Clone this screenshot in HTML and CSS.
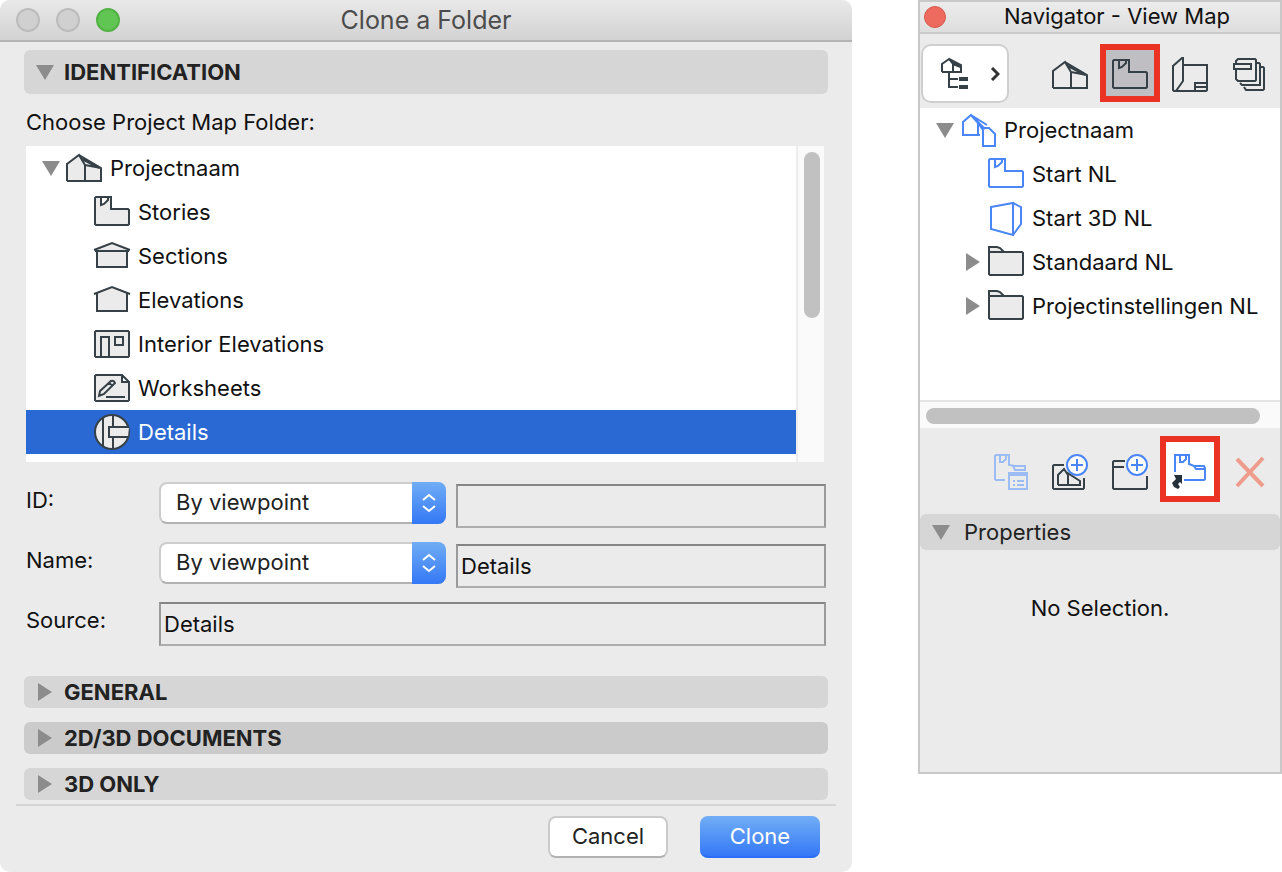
FILE: index.html
```
<!DOCTYPE html>
<html lang="en">
<head>
    <meta charset="UTF-8">
    <meta name="viewport" content="width=device-width, initial-scale=1.0">
    <title>Clone a Folder</title>
    <link rel="stylesheet" href="styles.css">
</head>
<body>

    <!-- shared icons -->
    <svg class="sprite" aria-hidden="true">
        <symbol id="arrow-down" viewBox="0 0 18 18"><path d="M0 2H18L9 17Z"/></symbol>
        <symbol id="arrow-right" viewBox="0 0 18 18"><path d="M2 0V18L16 9Z"/></symbol>
        <symbol id="house" viewBox="0 0 36 36">
            <path d="M1 31V14L13 5L19 15V31M13 5L35 18V31H1M19 15L35 18M16 9L33 18"/>
        </symbol>
        <symbol id="story" viewBox="0 0 36 36">
            <path d="M2 3H17V15H34L35 16V30L34 31H2L1 30V4ZM7 3V11L10 10L14 6V3"/>
        </symbol>
        <symbol id="folder" viewBox="0 0 36 36">
            <path d="M1 8H34L35 9V30L34 31H2L1 30V3H9L12 4L16 8"/>
        </symbol>
        <symbol id="updown" viewBox="0 0 18 24">
            <path d="M3 9L9 4L15 9M3 15L9 20L15 15"/>
        </symbol>
    </svg>

    <form class="dialog">
        <header class="dialog-title">
            <div class="lights">
                <span class="light"></span>
                <span class="light"></span>
                <span class="light green"></span>
            </div>
            <h1>Clone a Folder</h1>
        </header>

        <div class="dialog-body">
            <button type="button" class="section open">
                <svg class="arrow"><use href="#arrow-down"/></svg>IDENTIFICATION
            </button>

            <p class="caption">Choose Project Map Folder:</p>

            <div class="list">
                <ul class="tree">
                    <li class="row">
                        <span class="slot"><svg class="arrow"><use href="#arrow-down"/></svg></span>
                        <svg class="icon gray"><use href="#house"/></svg>Projectnaam
                    </li>
                    <li class="row child">
                        <svg class="icon gray"><use href="#story"/></svg>Stories
                    </li>
                    <li class="row child">
                        <svg class="icon gray" viewBox="0 0 36 36"><path d="M3 12V29H33V12M0 12L18 5L36 12M1 13H35"/></svg>Sections
                    </li>
                    <li class="row child">
                        <svg class="icon gray" viewBox="0 0 36 36"><path d="M0 12L3 11V29H33V11L36 12L18 5L0 12"/></svg>Elevations
                    </li>
                    <li class="row child">
                        <svg class="icon gray" viewBox="0 0 36 36"><path d="M2 5H34L35 6V30L34 31H2L1 30V6ZM7 31V11H15V31M21 11H29V19H21Z"/></svg>Interior Elevations
                    </li>
                    <li class="row child">
                        <svg class="icon gray" viewBox="0 0 36 36"><path d="M2 5H28L35 12V30L34 31H2L1 30V6ZM28 5V12H35M12 27H31M5 26L6 21L17 11Q20 10 21 13L10 24ZM15 13L19 16"/></svg>Worksheets
                    </li>
                    <li class="row child selected">
                        <svg class="icon gray" viewBox="0 0 36 36"><circle cx="18" cy="18" r="17"/><path d="M9 4V32M19 1V13M19 23V35M35 13H15V23H34"/></svg>Details
                    </li>
                </ul>
                <div class="scroll-y"><span class="thumb"></span></div>
            </div>

            <div class="field">
                <label for="id-mode">ID:</label>
                <div class="popup">
                    <select id="id-mode"><option>By viewpoint</option></select>
                    <span class="stepper"><svg><use href="#updown"/></svg></span>
                </div>
                <input type="text" id="id-value" aria-label="ID value" readonly>
            </div>
            <div class="field">
                <label for="name-mode">Name:</label>
                <div class="popup">
                    <select id="name-mode"><option>By viewpoint</option></select>
                    <span class="stepper"><svg><use href="#updown"/></svg></span>
                </div>
                <input type="text" id="name-value" aria-label="Name value" value="Details" readonly>
            </div>
            <div class="field source">
                <label for="source">Source:</label>
                <input type="text" id="source" value="Details" readonly>
            </div>

            <div class="sections">
                <button type="button" class="section"><svg class="arrow"><use href="#arrow-right"/></svg>GENERAL</button>
                <button type="button" class="section dark"><svg class="arrow"><use href="#arrow-right"/></svg>2D/3D DOCUMENTS</button>
                <button type="button" class="section"><svg class="arrow"><use href="#arrow-right"/></svg>3D ONLY</button>
            </div>
        </div>

        <footer class="actions">
            <button type="button" class="btn">Cancel</button>
            <button type="button" class="btn primary">Clone</button>
        </footer>
    </form>

    <aside class="navigator">
        <header class="nav-title">
            <button type="button" class="close" aria-label="Close"></button>
            <h2>Navigator - View Map</h2>
        </header>

        <div class="toolbar">
            <button type="button" class="chooser" aria-label="Project chooser">
                <svg class="chooser-icon" viewBox="0 0 28 34">
                    <path d="M1 15V7L8 2L12 7V15M8 2L20 8V15H1M12 7L20 10M8 15V30H17M8 22H17"/>
                    <path class="solid" d="M9 2L20 8V11L12 8ZM18 20H27V24H18ZM18 28H27V32H18Z"/>
                </svg>
                <svg class="chevron" viewBox="0 0 10 14"><path d="M2 1L8 7L2 13"/></svg>
            </button>
            <button type="button" class="tool" aria-label="Project Map"><svg class="icon"><use href="#house"/></svg></button>
            <button type="button" class="tool marked active" aria-label="View Map"><svg class="icon"><use href="#story"/></svg></button>
            <button type="button" class="tool" aria-label="Layout Book">
                <svg class="icon" viewBox="0 0 36 36"><path d="M11 8H35V33L34 34H2L1 33V9L10 1H11V24L4 34M23 34V26H35M23 30H35"/></svg>
            </button>
            <button type="button" class="tool" aria-label="Publisher Sets">
                <svg class="icon" viewBox="0 0 36 36"><path d="M4 7V4L6 2H23L24 3V23L23 24H6L4 22V12M2 7H19V12H2ZM25 6H27L28 7V28H10L8 26M29 10H31L32 11V32L31 33H14L12 30"/></svg>
            </button>
        </div>

        <ul class="tree nav-tree">
            <li class="row">
                <span class="slot"><svg class="arrow"><use href="#arrow-down"/></svg></span>
                <svg class="icon blue" viewBox="0 0 36 36"><path d="M20 23H3V10L11 3L18 11V23M11 3L27 13M14 6L25 17M18 11L23 18V34H35V22L29 16H23"/></svg>Projectnaam
            </li>
            <li class="row child">
                <svg class="icon blue"><use href="#story"/></svg>Start NL
            </li>
            <li class="row child">
                <svg class="icon blue" viewBox="0 0 36 36"><path d="M3 7L25 3V35L3 29ZM25 3L33 7V24L25 35"/></svg>Start 3D NL
            </li>
            <li class="row folder">
                <span class="slot"><svg class="arrow"><use href="#arrow-right"/></svg></span>
                <svg class="icon gray"><use href="#folder"/></svg>Standaard NL
            </li>
            <li class="row folder">
                <span class="slot"><svg class="arrow"><use href="#arrow-right"/></svg></span>
                <svg class="icon gray"><use href="#folder"/></svg>Projectinstellingen NL
            </li>
        </ul>
        <div class="scroll-x"><span class="thumb"></span></div>

        <div class="toolbar bottom">
            <button type="button" class="tool" aria-label="View Settings">
                <svg class="icon faded" viewBox="0 0 36 36"><path d="M13 26H4L3 25V2L4 1H17V11L23 12H33V16H23L21 12M8 1V8L11 8L14 5V1M17 19H35V35H17ZM17 21H35M21 27H23M25 27H32M21 31H23M25 31H32"/></svg>
            </button>
            <button type="button" class="tool" aria-label="Save Current View">
                <svg class="icon" viewBox="0 0 36 36">
                    <path d="M12 11H2L1 12V34L2 35H31L32 34V24M6 31V21L12 15L16 21V31M14 18L28 27V31H6"/>
                    <g class="plus"><circle cx="25" cy="11" r="10"/><path d="M25 5V17M19 11H31"/></g>
                </svg>
            </button>
            <button type="button" class="tool" aria-label="New Folder">
                <svg class="icon" viewBox="0 0 36 36">
                    <path d="M13 7H2L1 8V34L2 35H34L35 34V22M1 13H12"/>
                    <g class="plus"><circle cx="25" cy="11" r="10"/><path d="M25 5V17M19 11H31"/></g>
                </svg>
            </button>
            <button type="button" class="tool marked white" aria-label="Clone a Folder">
                <svg class="icon blue" viewBox="0 0 36 36">
                    <path d="M3 18V1H17V10L22 12H32L33 14V25L32 26H12M22 12L24 15H33M8 1V8L11 8L14 5V1"/>
                    <path class="alias" d="M2 21H10V30L8 28L6 30L8 33L6 35L2 33L0 29L4 25Z"/>
                </svg>
            </button>
            <button type="button" class="tool" aria-label="Delete">
                <svg class="icon cross" viewBox="0 0 36 36"><path d="M5 5L31 32M31 4L5 32"/></svg>
            </button>
        </div>

        <button type="button" class="properties">
            <svg class="arrow"><use href="#arrow-down"/></svg>Properties
        </button>
        <p class="empty">No Selection.</p>
    </aside>

</body>
</html>
```

FILE: styles.css
```
* {
    box-sizing: border-box;
}

body {
    margin: 0;
    background-color: #fff;
    color: #111;
    font-family: Inter, "Liberation Sans", sans-serif;
    font-size: 22px;
    line-height: 28px;
    display: grid;
    grid-template-columns: minmax(0, 852fr) minmax(0, 364fr);
    column-gap: 66px;
    align-items: start;
}

button, select, input {
    font: inherit;
    color: inherit;
    margin: 0;
}

button {
    border: none;
    background: none;
    padding: 0;
}

h1, h2, p, ul {
    margin: 0;
    padding: 0;
}

svg {
    display: block;
    flex: none;
}

.sprite {
    position: absolute;
    width: 0;
    height: 0;
}

/* icons */
.arrow {
    width: 18px;
    height: 18px;
    fill: #8c8c8c;
}

.icon {
    width: 36px;
    height: 36px;
    fill: none;
    stroke: #354047;
    stroke-width: 2;
    overflow: visible;
}

.icon.gray {
    fill: #ebebeb;
}

.icon.blue {
    stroke: #4a86f7;
}

.icon.faded {
    stroke: #9bbcf5;
}

.icon.cross {
    stroke: #ee9c8b;
    stroke-width: 4;
}

.plus {
    fill: #fff;
    stroke: #4a86f7;
}

.alias {
    fill: #263038;
    stroke: none;
}

/* clone dialog */
.dialog {
    background-color: #ebebeb;
    border-radius: 10px;
    overflow: hidden;
}

.dialog-title {
    display: grid;
    grid-template-columns: 1fr auto 1fr;
    align-items: center;
    height: 42px;
    padding: 0 16px;
    background: linear-gradient(#e9e9e9, #d2d2d2);
    border-bottom: 2px solid #b4b4b4;
}

.dialog-title h1 {
    font-size: 25px;
    font-weight: 400;
    color: #4c4c4c;
}

.lights {
    display: flex;
    gap: 16px;
}

.light {
    width: 24px;
    height: 24px;
    border-radius: 50%;
    background-color: #d0d0d0;
    border: 2px solid #bcbcbc;
}

.light.green {
    background-color: #61c554;
    border-color: #52b244;
}

.dialog-body {
    padding: 8px 24px 4px;
}

.section {
    display: flex;
    align-items: center;
    gap: 10px;
    width: 100%;
    height: 32px;
    padding: 0 12px;
    border-radius: 6px;
    background-color: #d6d6d6;
    color: #222;
    font-weight: 700;
    text-align: left;
}

.section.open {
    height: 44px;
}

.section.dark {
    background-color: #cbcbcb;
}

.caption {
    padding: 14px 2px 10px;
}

.list {
    display: flex;
    margin: 0 4px 20px 2px;
    height: 316px;
    background-color: #fff;
}

.tree {
    flex: 1;
    list-style: none;
}

.row {
    display: flex;
    align-items: center;
    height: 44px;
    padding-left: 16px;
    white-space: nowrap;
}

.row.child {
    padding-left: 68px;
}

.row.folder {
    padding-left: 44px;
}

.row .icon {
    margin-right: 8px;
}

.row.selected {
    background-color: #2a69d4;
    color: #fff;
}

.slot {
    width: 24px;
}

.scroll-y {
    width: 28px;
    padding: 6px 4px 0 6px;
    border-left: 2px solid #ededed;
    background-color: #fafafa;
}

.thumb {
    display: block;
    border-radius: 8px;
    background-color: #c1c1c1;
}

.scroll-y .thumb {
    width: 16px;
    height: 166px;
}

.field {
    display: grid;
    grid-template-columns: 133px minmax(0, 287fr) minmax(0, 380fr);
    align-items: start;
    height: 60px;
    padding: 0 2px;
}

.field label {
    line-height: 36px;
}

.popup {
    position: relative;
}

.popup select {
    display: block;
    appearance: none;
    width: 100%;
    height: 42px;
    padding: 0 50px 2px 15px;
    border: 2px solid #cdcdcd;
    border-bottom-color: #b2b2b2;
    border-radius: 8px;
    background-color: #fff;
    color: #222;
}

.stepper {
    position: absolute;
    top: 0;
    right: 0;
    display: flex;
    align-items: center;
    justify-content: center;
    width: 34px;
    height: 42px;
    border-radius: 0 8px 8px 0;
    background: linear-gradient(#70adf5, #3478f6);
    pointer-events: none;
}

.stepper svg {
    width: 18px;
    height: 24px;
    fill: none;
    stroke: #fff;
    stroke-width: 2;
}

.field input {
    min-width: 0;
    height: 44px;
    margin-top: 2px;
    margin-left: 10px;
    padding: 0 3px;
    border: 2px solid #9a9a9a;
    border-top-color: #858585;
    border-bottom-color: #adadad;
    border-radius: 0;
    background-color: #ebebeb;
}

.field.source {
    grid-template-columns: 133px minmax(0, 1fr);
    height: 74px;
}

.field.source input {
    margin: 0;
}

.sections {
    display: flex;
    flex-direction: column;
    gap: 14px;
}

.actions {
    display: flex;
    justify-content: flex-end;
    gap: 32px;
    margin: 0 16px;
    padding: 10px 16px 14px;
    border-top: 2px solid #d5d5d5;
}

.btn {
    width: 120px;
    height: 42px;
    padding-bottom: 2px;
    border: 2px solid #cbcbcb;
    border-bottom-color: #b2b2b2;
    border-radius: 8px;
    background-color: #fff;
    color: #222;
}

.btn.primary {
    padding: 0;
    border: none;
    border-bottom: 2px solid #2a6df8;
    background: linear-gradient(#72aef6, #3478f6);
    color: #fff;
}

/* navigator palette */
.navigator {
    border: 2px solid #c8c8c8;
    background-color: #ebebeb;
}

.nav-title {
    display: flex;
    align-items: center;
    height: 32px;
    padding: 0 4px;
    background: linear-gradient(#ececec, #dedede);
    border-bottom: 2px solid #cbcbcb;
}

.nav-title h2 {
    flex: 1;
    padding: 0 0 2px 12px;
    font-size: 22px;
    font-weight: 400;
    text-align: center;
}

.close {
    width: 22px;
    height: 22px;
    border-radius: 50%;
    background-color: #ed6a5f;
    border: 1px solid #d9574c;
}

.toolbar {
    display: flex;
    justify-content: flex-end;
    height: 74px;
    padding-top: 10px;
}

.tool {
    display: flex;
    align-items: center;
    justify-content: center;
    width: 60px;
    height: 58px;
    padding-top: 4px;
}

.toolbar.bottom {
    height: 86px;
    padding-top: 8px;
}

.bottom .tool {
    height: 66px;
    padding-top: 6px;
}

.marked,
.bottom .marked {
    border: 6px solid #ea3323;
}

.active {
    background-color: #bfbec3;
}

.white {
    background-color: #fff;
}

.chooser {
    display: flex;
    align-items: center;
    justify-content: space-between;
    width: 88px;
    height: 59px;
    margin: 0 auto 0 1px;
    padding: 0 7px 0 18px;
    border: 2px solid #cfcfcf;
    border-radius: 10px;
    background-color: #fff;
}

.chooser-icon {
    width: 28px;
    height: 34px;
    fill: none;
    stroke: #354047;
    stroke-width: 2;
}

.chooser-icon .solid {
    fill: #354047;
    stroke: none;
}

.chevron {
    width: 10px;
    height: 14px;
    fill: none;
    stroke: #333;
    stroke-width: 3;
}

.nav-tree {
    height: 292px;
    background-color: #fff;
}

.scroll-x {
    height: 28px;
    padding: 6px 20px 0 6px;
    border-top: 2px solid #e4e4e4;
    background-color: #fafafa;
}

.scroll-x .thumb {
    height: 16px;
}

.properties {
    display: flex;
    align-items: center;
    gap: 14px;
    width: 100%;
    height: 36px;
    padding: 0 12px;
    border-radius: 6px;
    background-color: #d6d6d6;
    color: #222;
}

.empty {
    min-height: 222px;
    padding-top: 44px;
    text-align: center;
}
```
